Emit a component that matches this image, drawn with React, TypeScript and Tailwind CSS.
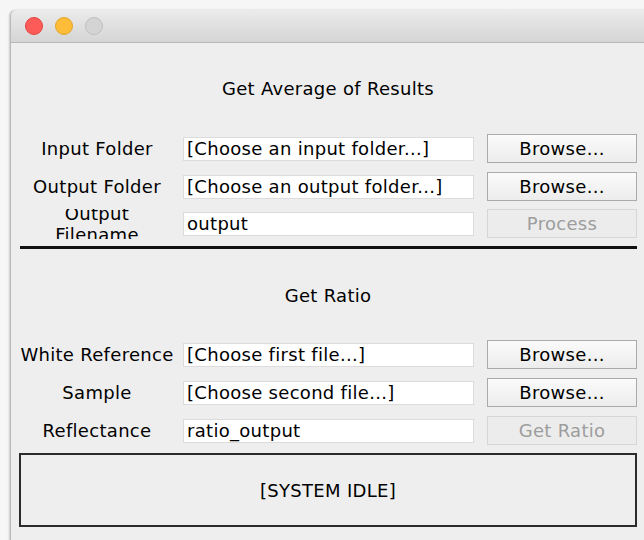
import React from 'react';

const FONT = { fontFamily: '"DejaVu Sans", Verdana, sans-serif' };

type RowProps = {
  label: React.ReactNode;
  value: string;
  action: string;
  disabled?: boolean;
  className?: string;
};

// One form line: centred label, text field, push button
const FormRow: React.FC<RowProps> = ({ label, value, action, disabled, className = '' }) => (
  <div className={`flex items-center h-[29px] ${className}`}>
    <div className="w-[156px] h-[30px] flex items-center justify-center text-center text-black overflow-hidden leading-[21px]">
      {label}
    </div>
    <div className="ml-[8px] w-[291px] h-[24px] bg-white border border-[#dcdcdc] pl-[3px] flex items-center text-black whitespace-nowrap overflow-hidden">
      {value}
    </div>
    <button
      type="button"
      disabled={disabled}
      className={`ml-[13px] w-[150px] h-[29px] border flex items-center justify-center ${
        disabled
          ? 'border-[#d6d6d6] bg-[#ececec] text-[#9d9d9d]'
          : 'border-[#aaaaaa] bg-gradient-to-b from-[#fbfbfb] to-[#ececec] text-black'
      }`}
    >
      {action}
    </button>
  </div>
);

const TrafficLights: React.FC = () => (
  <div className="flex items-center gap-[12px] pl-[14px]">
    <span className="w-[18px] h-[18px] rounded-full bg-[#fc5b57] border border-[#e5443f]" />
    <span className="w-[18px] h-[18px] rounded-full bg-[#fdbd38] border border-[#e2a52c]" />
    <span className="w-[18px] h-[18px] rounded-full bg-[#d4d4d4] border border-[#c0c0c0]" />
  </div>
);

export default function App() {
  return (
    <div className="w-[644px] h-[540px] bg-[#f6f6f6] pl-[10px] pt-[10px] overflow-hidden" style={FONT}>
      <div className="w-[660px] h-[540px] rounded-tl-[6px] border-l border-[#b9b9b9] shadow-[-1px_0_2px_rgba(0,0,0,0.18)] bg-[#eeeeee] overflow-hidden">
        {/* title bar */}
        <div className="h-[33px] flex items-center bg-gradient-to-b from-[#ebebeb] to-[#d5d5d5] border-b border-[#b8b8b8] rounded-tl-[6px]">
          <TrafficLights />
        </div>

        <div className="pl-[8px] w-[626px] text-[18px] tracking-[0.3px]">
          {/* average section */}
          <div className="mt-[34px] h-[24px] leading-[24px] text-center text-black w-[618px]">
            Get Average of Results
          </div>
          <FormRow className="mt-[33px]" label="Input Folder" value="[Choose an input folder...]" action="Browse..." />
          <FormRow className="mt-[9px]" label="Output Folder" value="[Choose an output folder...]" action="Browse..." />
          <FormRow
            className="mt-[8px]"
            label={
              <div className="flex flex-col">
                <span>Output</span>
                <span>Filename</span>
              </div>
            }
            value="output"
            action="Process"
            disabled
          />

          <div className="mt-[8px] ml-[1px] w-[617px] h-[3px] bg-[#111111]" />

          {/* ratio section */}
          <div className="mt-[35px] h-[24px] leading-[24px] text-center text-black w-[618px]">
            Get Ratio
          </div>
          <FormRow className="mt-[32px]" label="White Reference" value="[Choose first file...]" action="Browse..." />
          <FormRow className="mt-[9px]" label="Sample" value="[Choose second file...]" action="Browse..." />
          <FormRow className="mt-[9px]" label="Reflectance" value="ratio_output" action="Get Ratio" disabled />

          {/* status box */}
          <div className="mt-[8px] w-[618px] h-[74px] border-2 border-[#2b2b2b] flex items-center justify-center text-black">
            [SYSTEM IDLE]
          </div>
        </div>
      </div>
    </div>
  );
}
